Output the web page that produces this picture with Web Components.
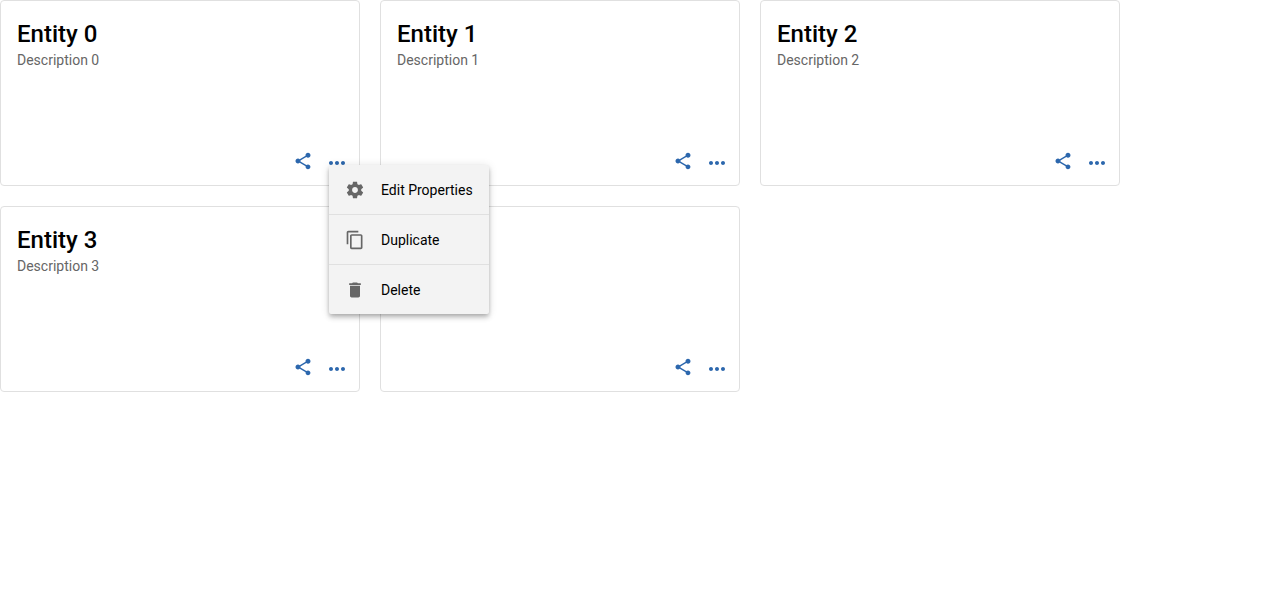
<!DOCTYPE html>
<html lang="en">
<head>
<meta charset="utf-8">
<title>Entities</title>
<style>
body { margin: 0; background: #fff; color: #000; font-family: Roboto, "Liberation Sans", sans-serif; font-size: 14px; }
</style>
</head>
<body>
<entity-grid>
  <entity-card>
    <span slot="title">Entity 0</span>
    <span slot="description">Description 0</span>
    <entity-menu slot="menu">
      <menu-item icon="settings">Edit Properties</menu-item>
      <menu-item icon="copy">Duplicate</menu-item>
      <menu-item icon="delete">Delete</menu-item>
    </entity-menu>
  </entity-card>
  <entity-card>
    <span slot="title">Entity 1</span>
    <span slot="description">Description 1</span>
  </entity-card>
  <entity-card>
    <span slot="title">Entity 2</span>
    <span slot="description">Description 2</span>
  </entity-card>
  <entity-card>
    <span slot="title">Entity 3</span>
    <span slot="description">Description 3</span>
  </entity-card>
  <entity-card></entity-card>
</entity-grid>

<script>
const ICONS = {
  share: 'M18 16.08c-.76 0-1.44.3-1.96.77L8.91 12.7c.05-.23.09-.46.09-.7s-.04-.47-.09-.7l7.05-4.11c.54.5 1.25.81 2.04.81 1.66 0 3-1.34 3-3s-1.34-3-3-3-3 1.34-3 3c0 .24.04.47.09.7L8.04 9.81C7.5 9.31 6.79 9 6 9c-1.66 0-3 1.34-3 3s1.34 3 3 3c.79 0 1.5-.31 2.04-.81l7.12 4.16c-.05.21-.08.43-.08.65 0 1.61 1.31 2.92 2.92 2.92s2.92-1.31 2.92-2.92-1.31-2.92-2.92-2.92z',
  more: 'M6 10c-1.1 0-2 .9-2 2s.9 2 2 2 2-.9 2-2-.9-2-2-2zm12 0c-1.1 0-2 .9-2 2s.9 2 2 2 2-.9 2-2-.9-2-2-2zm-6 0c-1.1 0-2 .9-2 2s.9 2 2 2 2-.9 2-2-.9-2-2-2z',
  settings: 'M19.43 12.98c.04-.32.07-.64.07-.98s-.03-.66-.07-.98l2.11-1.65c.19-.15.24-.42.12-.64l-2-3.46c-.12-.22-.39-.3-.61-.22l-2.49 1c-.52-.4-1.08-.73-1.69-.98l-.38-2.65C14.46 2.18 14.25 2 14 2h-4c-.25 0-.46.18-.49.42l-.38 2.65c-.61.25-1.17.59-1.69.98l-2.49-1c-.23-.09-.49 0-.61.22l-2 3.46c-.13.22-.07.49.12.64l2.11 1.65c-.04.32-.07.65-.07.98s.03.66.07.98l-2.11 1.65c-.19.15-.24.42-.12.64l2 3.46c.12.22.39.3.61.22l2.49-1c.52.4 1.08.73 1.69.98l.38 2.65c.03.24.24.42.49.42h4c.25 0 .46-.18.49-.42l.38-2.65c.61-.25 1.17-.59 1.69-.98l2.49 1c.23.09.49 0 .61-.22l2-3.46c.12-.22.07-.49-.12-.64l-2.11-1.65zM12 15.5c-1.93 0-3.5-1.57-3.5-3.5s1.57-3.5 3.5-3.5 3.5 1.57 3.5 3.5-1.57 3.5-3.5 3.5z',
  copy: 'M16 1H4c-1.1 0-2 .9-2 2v14h2V3h12V1zm3 4H8c-1.1 0-2 .9-2 2v14c0 1.1.9 2 2 2h11c1.1 0 2-.9 2-2V7c0-1.1-.9-2-2-2zm0 16H8V7h11v14z',
  delete: 'M6 19c0 1.1.9 2 2 2h8c1.1 0 2-.9 2-2V7H6v12zM19 4h-3.5l-1-1h-5l-1 1H5v2h14V4z'
};
const icon = (name, size) =>
  `<svg width="${size}" height="${size}" viewBox="0 0 24 24" fill="currentColor" aria-hidden="true"><path d="${ICONS[name]}"/></svg>`;

customElements.define('entity-grid', class extends HTMLElement {
  constructor() {
    super();
    this.attachShadow({ mode: 'open' }).innerHTML = `
      <style>
        :host { display: grid; grid-template-columns: repeat(auto-fill, minmax(min(360px, 100%), 360px)); gap: 20px; }
      </style>
      <slot></slot>`;
  }
});

customElements.define('entity-card', class extends HTMLElement {
  constructor() {
    super();
    this.attachShadow({ mode: 'open' }).innerHTML = `
      <style>
        :host { display: flex; flex-direction: column; justify-content: space-between; box-sizing: border-box;
                min-height: 186px; border: 1px solid #e0e0e0; border-radius: 4px; background: #fff; }
        header { padding: 17px 16px 0; }
        h2 { margin: 0; font-size: 24px; font-weight: 500; line-height: 32px; }
        p { margin: 0; line-height: 20px; color: #666; }
        footer { display: flex; justify-content: flex-end; align-items: flex-start; gap: 12px; padding: 10px; color: #2c67ad; }
        button { display: block; margin: 0; padding: 0; border: 0; background: none; color: inherit; cursor: pointer; }
        svg { display: block; }
        .more { position: relative; }
      </style>
      <header>
        <h2><slot name="title"></slot></h2>
        <p><slot name="description"></slot></p>
      </header>
      <footer>
        <button type="button" aria-label="Share">${icon('share', 20)}</button>
        <div class="more">
          <button type="button" aria-label="More actions" aria-haspopup="menu">${icon('more', 24)}</button>
          <slot name="menu"></slot>
        </div>
      </footer>`;
  }
});

customElements.define('entity-menu', class extends HTMLElement {
  constructor() {
    super();
    this.attachShadow({ mode: 'open' }).innerHTML = `
      <style>
        :host { position: absolute; z-index: 1; top: 14px; left: 4px; display: block; background: #f3f3f3; color: #000;
                border-radius: 2px;
                box-shadow: 0 2px 4px -1px rgba(0, 0, 0, .2), 0 4px 5px rgba(0, 0, 0, .14), 0 1px 10px rgba(0, 0, 0, .12); }
        ::slotted(:not(:first-child)) { border-top: 1px solid #e0e0e0; }
      </style>
      <slot></slot>`;
    this.setAttribute('role', 'menu');
  }
});

customElements.define('menu-item', class extends HTMLElement {
  constructor() {
    super();
    this.attachShadow({ mode: 'open' }).innerHTML = `
      <style>
        :host { display: block; }
        button { display: flex; align-items: center; gap: 16px; width: 100%; height: 49px; margin: 0; padding: 0 16px;
                 border: 0; background: none; color: inherit; font: inherit; line-height: 20px; white-space: nowrap; cursor: pointer; }
        svg { flex: none; color: #666; }
      </style>
      <button type="button" role="menuitem">${icon(this.getAttribute('icon'), 20)}<slot></slot></button>`;
  }
});
</script>
</body>
</html>
